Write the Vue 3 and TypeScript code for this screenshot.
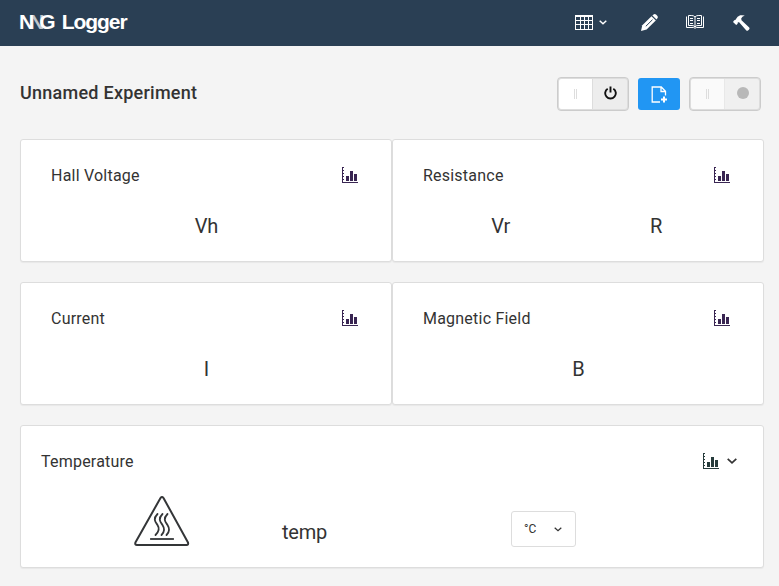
<script setup lang="ts">
interface Reading { label: string }
interface Panel { title: string; readings: Reading[] }

const rows: Panel[][] = [
  [
    { title: 'Hall Voltage', readings: [{ label: 'Vh' }] },
    { title: 'Resistance', readings: [{ label: 'Vr' }, { label: 'R' }] },
  ],
  [
    { title: 'Current', readings: [{ label: 'I' }] },
    { title: 'Magnetic Field', readings: [{ label: 'B' }] },
  ],
]
</script>

<template>
  <div class="page">
    <header class="topbar">
      <div class="brand"><span class="n1">N</span><span class="n2">N</span><span class="g">G</span><span class="word">Logger</span></div>
      <nav class="nav">
        <svg class="i-table" width="18" height="15" viewBox="0 0 18 15">
          <path d="M0 0H18V15H0Z" fill="#fff" />
          <path d="M1 2h4v3H1zM6 2h3v3H6zM10 2h3v3h-3zM14 2h3v3h-3zM1 6h4v3H1zM6 6h3v3H6zM10 6h3v3h-3zM14 6h3v3h-3zM1 10h4v4H1zM6 10h3v4H6zM10 10h3v4h-3zM14 10h3v4h-3z" fill="#2a3f54" />
        </svg>
        <svg class="i-caret" width="8" height="5" viewBox="0 0 8 5"><path d="M.7.8 4 3.8 7.3.8" fill="none" stroke="#fff" stroke-width="1.5" /></svg>
        <svg class="i-pencil" width="17" height="17" viewBox="0 0 17 17">
          <path d="M0 17 1.3 11.3 10.5 2.2 14.8 6.4 5.6 15.6Z" fill="#fff" />
          <path d="M11.4 1.4 12.5.5Q13.8-.5 15.3.8L16 1.5Q17.4 2.9 16.4 4.3L15.5 5.4Z" fill="#fff" />
          <path d="M4.8 12.3 11.5 5.7" stroke="#2a3f54" stroke-width="1" />
        </svg>
        <svg class="i-book" width="18" height="14" viewBox="0 0 18 14">
          <path d="M9 2Q7.8.5 5.8.5H2.5V10.5H6Q8.2 10.5 9 12Q9.8 10.5 12 10.5h3.5V.5h-3.3Q10.2.5 9 2V12M.5 1.5V12.5H7.5L9 13.2l1.5-.7h7V1.5" fill="none" stroke="#fff" stroke-width="1" />
          <path d="M4 3.5h3M4 5.5h3M4 8.5h3M11 3.5h3M11 5.5h3M11 8.5h3" stroke="#fff" stroke-width="1" />
        </svg>
        <svg class="i-hammer" width="17" height="16" viewBox="0 0 17 16">
          <path d="M0 7 1.2 5.2 2.3 5Q4.5 1 7.2.3 9.5-.1 11.8.6 8.9 1.4 8.2 3.6L8.5 5.3 16.2 12.4Q17 13.4 16.1 14.4L15 15.6Q14 16.2 13.1 15.2L6.1 7.2 5.2 7.3 4.6 7.7 4.7 8.8 3.2 10Z" fill="#fff" />
        </svg>
      </nav>
    </header>

    <main class="content">
      <section class="titlebar">
        <h1>Unnamed Experiment</h1>
        <div class="tools">
          <div class="switch">
            <span class="knob"><i></i></span>
            <span class="state"><svg width="13" height="14" viewBox="0 0 13 14"><path d="M3.7 2.7A5.3 5.3 0 1 0 9.3 2.7M6.5.5V6.5" fill="none" stroke="#111" stroke-width="1.9" /></svg></span>
          </div>
          <button class="new" type="button">
            <svg width="17" height="17" viewBox="0 0 17 17" fill="none"><path d="M9 16H1.2V1H10.3L14.5 5.2V9.5M10 1V5.5H14.5" stroke="#fff" stroke-width="1.3" /><path d="M13 10.5V16.5M10 13.5H16" stroke="#fff" stroke-width="2" /></svg>
          </button>
          <div class="switch disabled">
            <span class="knob"><i></i></span>
            <span class="state"><b class="dot"></b></span>
          </div>
        </div>
      </section>

      <section v-for="(row, r) in rows" :key="r" class="row">
        <article v-for="panel in row" :key="panel.title" class="card">
          <div class="head">
            <h2>{{ panel.title }}</h2>
            <svg class="chart" width="17" height="16" viewBox="0 0 17 16"><path d="M0 0h2v1H1v2h1v1H1v2h1v1H1v2h1v1H1v2h1v1H1v2h15v1H0z M4 9h3v5H4zM8 4h3v10H8zM12 7h3v7h-3z" fill="#392552" /></svg>
          </div>
          <div class="values"><span v-for="v in panel.readings" :key="v.label">{{ v.label }}</span></div>
        </article>
      </section>

      <article class="card wide">
        <div class="head">
          <h2>Temperature</h2>
          <svg class="chart" width="17" height="16" viewBox="0 0 17 16"><path d="M0 0h2v1H1v2h1v1H1v2h1v1H1v2h1v1H1v2h1v1H1v2h15v1H0z M4 9h3v5H4zM8 4h3v10H8zM12 7h3v7h-3z" fill="#263b3b" /></svg>
          <svg class="down" width="10" height="6" viewBox="0 0 10 6"><path d="M.7.8 5 4.8 9.3.8" fill="none" stroke="#333" stroke-width="1.7" /></svg>
        </div>
        <div class="temp">
          <svg class="hot" width="56" height="51" viewBox="0 0 56 51" fill="none" stroke="#343638" stroke-width="2" stroke-linecap="round" stroke-linejoin="round">
            <path d="M26.5 2Q28 0 29.5 2L54 46.5Q54.7 49 52.5 49H3Q.7 49 1.4 46.5Z" />
            <path d="M17 43H39" stroke-linecap="square" stroke-width="1.8" />
            <path d="M23.5 18c-5 5-2 8 0 11s1 7-2 10M28.5 18c-5 5-2 8 0 11s2 7-1 10M33.5 18c-5 5-2 8 0 11s2 7-1 10" stroke-width="1.8" />
          </svg>
          <span class="reading">temp</span>
          <button class="unit" type="button"><span>°C</span><svg width="8" height="5" viewBox="0 0 8 5"><path d="M.7.7 4 3.7 7.3.7" fill="none" stroke="#333" stroke-width="1.2" /></svg></button>
        </div>
      </article>
    </main>
  </div>
</template>

<style>
body { margin: 0; background: #f4f4f4; overflow: hidden; }
</style>

<style scoped>
* { box-sizing: border-box; }
.page { height: 586px; background: #f4f4f4; font-family: Roboto, sans-serif; color: #333; }
.topbar { height: 46px; background: #2a3f54; display: flex; justify-content: space-between; padding: 0 29px 0 19px; }
.brand { display: flex; height: 44px; align-items: center; color: #fff; font: bold 21px/44px "Liberation Sans", Arial, sans-serif; }
.n2 { margin-left: -5px; opacity: .7; }
.g { margin-left: -5px; }
.word { margin-left: 6px; letter-spacing: -1.05px; }
.nav { display: flex; align-items: flex-start; }
.i-table { margin-top: 15px; }
.i-caret { margin: 20px 0 0 6px; }
.i-pencil { margin: 14px 0 0 34px; }
.i-book { margin: 15px 0 0 28px; }
.i-hammer { margin: 15px 0 0 29px; }
.content { padding: 0 15px 0 20px; }
.titlebar { height: 93px; display: flex; justify-content: space-between; align-items: flex-start; padding: 31px 3px 0 0; }
h1 { font-size: 18px; line-height: 30px; font-weight: 500; letter-spacing: .25px; margin: 1px 0 0; }
.tools { display: flex; align-items: center; gap: 9px; }
.switch { width: 72px; height: 34px; border: 1px solid #ccc; border-radius: 4px; display: flex; background: #ededed; box-shadow: inset 0 0 0 1px #ddd; }
.knob { width: 34px; margin: 1px 0 1px 1px; background: #fff; border-right: 1px solid #ddd; display: flex; align-items: center; justify-content: center; border-radius: 3px 0 0 3px; }
.knob i { width: 3px; height: 10px; border: solid #ddd; border-width: 0 1px; }
.state { flex: 1; display: flex; align-items: center; justify-content: center; padding-bottom: 2px; }
.disabled { background: #f0f0f0; }
.disabled .knob { background: #fafafa; border-right-color: #e8e8e8; }
.dot { width: 12px; height: 12px; border-radius: 50%; background: #b8b8b8; }
.new { width: 42px; height: 32px; padding: 0; border: 0; border-radius: 3px; background: #2196f3; display: flex; align-items: center; justify-content: center; }
.row { display: grid; grid-template-columns: 1fr 1fr; margin-bottom: 20px; }
.card { height: 123px; background: #fff; border: 1px solid #ddd; border-radius: 3px; padding: 20px 32px 0 30px; box-shadow: 0 1px 1px rgba(0, 0, 0, .05); }
.head { height: 30px; display: flex; align-items: center; }
h2 { font-size: 16px; line-height: 30px; font-weight: 400; letter-spacing: .22px; margin: 2px auto 0 0; }
.values { display: flex; margin: 21px -3px 0 0; line-height: 30px; font-size: 20px; }
.values span { flex: 1; text-align: center; }
.wide { height: 143px; padding: 20px 26px 0 20px; }
.wide .down { margin-left: 7px; }
.temp { display: flex; align-items: flex-start; padding: 20px 0 0 93px; }
.reading { font-size: 20px; line-height: 30px; letter-spacing: -.2px; margin: 21px 0 0 92px; width: 229px; }
.unit { width: 65px; height: 36px; margin-top: 15px; border: 1px solid #ddd; border-radius: 3px; background: #fff; padding: 0 13px 0 12px; display: flex; align-items: center; justify-content: space-between; color: #333; font: 12px Roboto, sans-serif; }
</style>
